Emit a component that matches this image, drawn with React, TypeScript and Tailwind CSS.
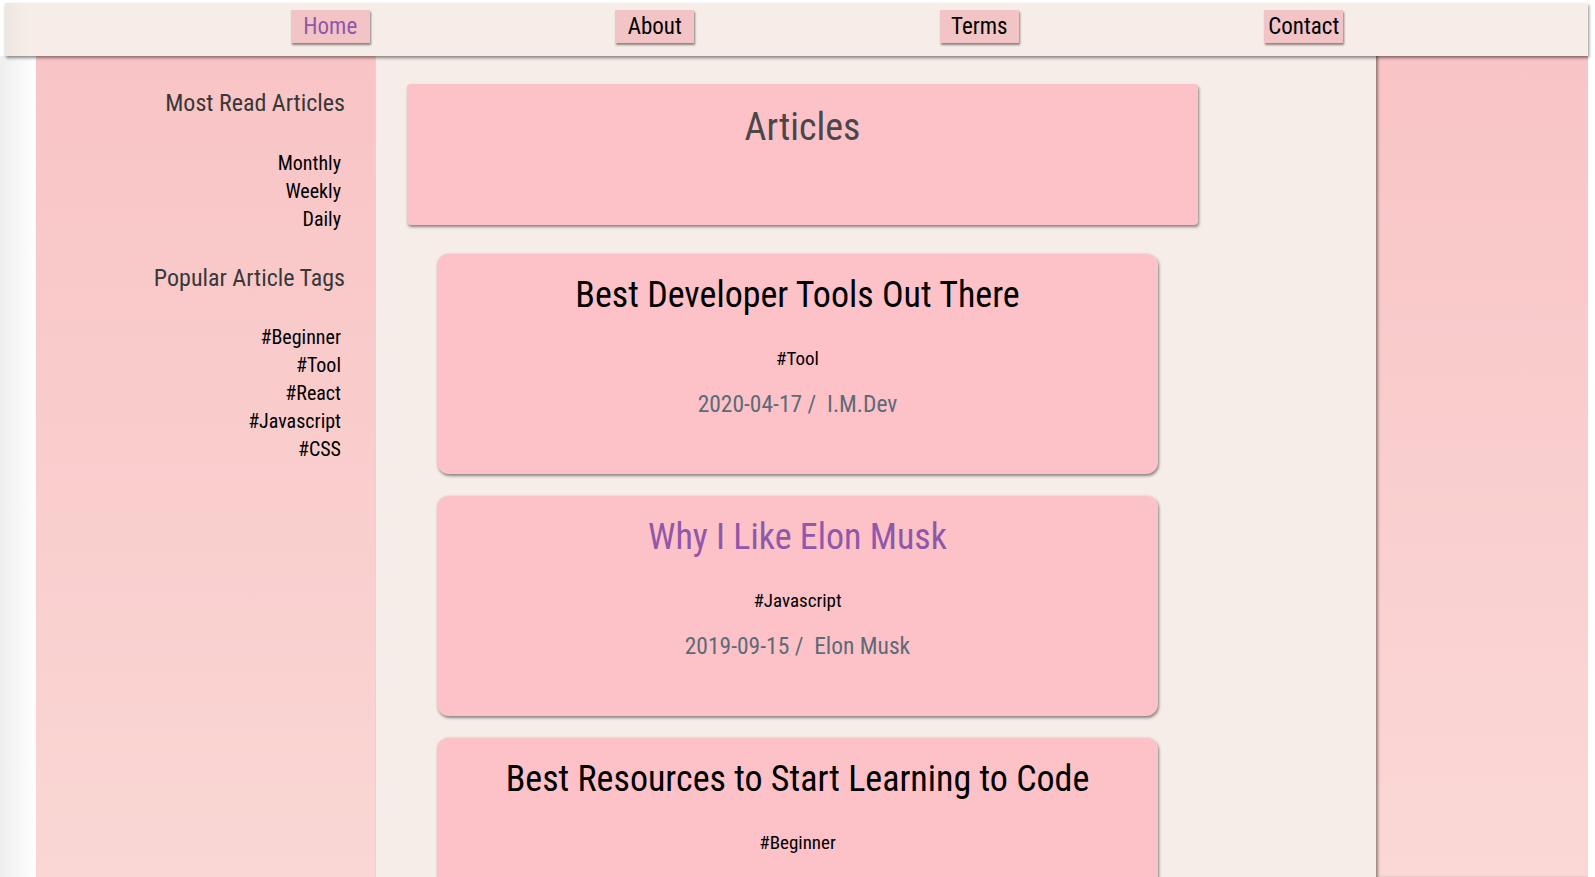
import React from "react";

const navItems = ["Home", "About", "Terms", "Contact"];
const mostRead = ["Monthly", "Weekly", "Daily"];
const tags = ["#Beginner", "#Tool", "#React", "#Javascript", "#CSS"];
const articles = [
  { title: "Best Developer Tools Out There", tag: "#Tool", date: "2020-04-17", author: "I.M.Dev", hover: false },
  { title: "Why I Like Elon Musk", tag: "#Javascript", date: "2019-09-15", author: "Elon Musk", hover: true },
  { title: "Best Resources to Start Learning to Code", tag: "#Beginner", date: "2020-03-02", author: "Code Newbie", hover: false },
];

export default function App() {
  return (
    <div className="h-[877px] w-[1595px] overflow-hidden bg-white font-[family-name:Roboto_Condensed,Liberation_Sans,sans-serif]">
      <div className="relative z-10 ml-[5px] mr-[7px] mt-[3px] flex h-[53px] bg-[#f7ede8] bg-gradient-to-r from-[#eee6e2] via-[#f7ede8] via-[1.5%] to-[#f7ede8] shadow-[1px_2px_3px_rgba(0,0,0,0.45)]">
        <div className="ml-[163px] flex w-[1298px] items-start justify-around pt-[7px]">
          {navItems.map((n, i) => (
            <a
              key={n}
              className={`flex h-[33px] w-[79px] items-center justify-center bg-[#f2c4c6] text-[23px] leading-none shadow-[1px_2px_2px_rgba(0,0,0,0.45)] ${i === 0 ? "text-[#9157aa]" : "text-black"}`}
            >
              {n}
            </a>
          ))}
        </div>
      </div>
      <div className="flex h-[821px]">
        <div className="w-[36px] bg-gradient-to-r from-[#eeeeee] to-white" />
        <aside className="w-[340px] border-r border-[#efcfcc] bg-gradient-to-b from-[#f9c4c6] to-[#f9d7d4] text-right">
          <h3 className="mt-[31px] pr-[30px] text-[24px] leading-[32px] text-[#383838]">Most Read Articles</h3>
          <ul className="mt-[30px] pr-[34px] text-[20px] leading-[28px] text-black">
            {mostRead.map((m) => (
              <li key={m}>{m}</li>
            ))}
          </ul>
          <h3 className="mt-[29px] pr-[30px] text-[24px] leading-[32px] text-[#383838]">Popular Article Tags</h3>
          <ul className="mt-[29px] pr-[34px] text-[20px] leading-[28px] text-black">
            {tags.map((t) => (
              <li key={t}>{t}</li>
            ))}
          </ul>
        </aside>
        <main className="w-[1000px] bg-[#f7ede8] pt-[28px]">
          <div className="ml-[31px] h-[141px] w-[791px] rounded-[4px] bg-[#fcc2c7] pt-[19px] text-center shadow-[1px_2px_3px_rgba(0,0,0,0.45)]">
            <h1 className="text-[38px] leading-[48px] text-[#4b4748]">Articles</h1>
          </div>
          <div className="mt-[28px] flex flex-col gap-[21px]">
            {articles.map((a) => (
              <div
                key={a.title}
                className="ml-[61px] h-[221px] w-[721px] shrink-0 rounded-[12px] border-t border-[#ecdcd8] bg-[#fcc2c7] pt-[19px] text-center shadow-[1px_2px_3px_rgba(0,0,0,0.45)]"
              >
                <h2 className={`text-[36px] leading-[44px] ${a.hover ? "text-[#9157aa]" : "text-black"}`}>{a.title}</h2>
                <div className="mt-[30px] text-[19px] leading-[24px] text-black">{a.tag}</div>
                <div className="mt-[19px] text-[23.5px] leading-[28px] text-[#5e6a78]">
                  {a.date} /&nbsp; {a.author}
                </div>
              </div>
            ))}
          </div>
        </main>
        <div className="w-[212px] bg-gradient-to-b from-[#f9c4c6] to-[#fad8d6] shadow-[inset_3px_0_3px_-1px_rgba(0,0,0,0.4)]" />
        <div className="w-[7px] bg-white" />
      </div>
    </div>
  );
}
